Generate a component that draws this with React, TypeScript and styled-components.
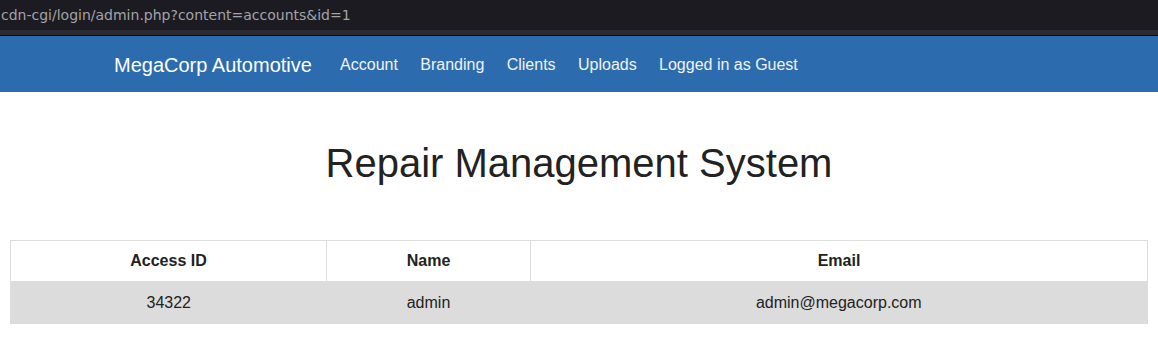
import React from "react";
import styled, { createGlobalStyle } from "styled-components";

const Global = createGlobalStyle`
  html, body { margin: 0; padding: 0; background: #fff; }
  body { font-family: "Liberation Sans", Arial, sans-serif; color: #222; }
`;

const AddressBar = styled.div`
  height: 30px;
  background: #1c1b22;
  display: flex;
  align-items: center;
  overflow: hidden;
`;

const Url = styled.span`
  font-family: "DejaVu Sans", sans-serif;
  font-size: 14px;
  color: #a3a3a8;
  white-space: nowrap;
  padding-left: 1px;
`;

const Strip = styled.div`
  height: 5px;
  background: #2b2a33;
  border-bottom: 1px solid #0c0c0d;
`;

const Navbar = styled.nav`
  height: 56px;
  box-sizing: border-box;
  padding-top: 2px;
  background: #2c6cae;
  display: flex;
  align-items: center;
  padding-left: 114px;
`;

const Brand = styled.a`
  font-size: 20px;
  color: #fff;
  margin-right: 17px;
`;

const NavLink = styled.a`
  font-size: 16px;
  color: #f2f2f2;
  padding: 0 11.2px;
`;

const Title = styled.h1`
  margin: 45px 0 51px;
  text-align: center;
  font-size: 40px;
  font-weight: 400;
  line-height: 52px;
  color: #222;
`;

const Table = styled.table`
  margin: 0 10px;
  width: calc(100% - 20px);
  border-collapse: collapse;
  border: 1px solid #dddddd;
`;

const Th = styled.th`
  height: 40px;
  padding: 0;
  font-size: 16px;
  font-weight: 700;
  text-align: center;
  color: #222;
  border: 1px solid #dddddd;
`;

const Row = styled.tr<{ $shade?: boolean }>`
  background: ${(p) => (p.$shade ? "#dcdcdc" : "#fff")};
`;

const Td = styled.td`
  height: 41px;
  padding: 0;
  font-size: 16px;
  text-align: center;
  color: #222;
`;

export default function App() {
  return (
    <>
      <Global />
      <AddressBar>
        <Url>cdn-cgi/login/admin.php?content=accounts&amp;id=1</Url>
      </AddressBar>
      <Strip />
      <Navbar>
        <Brand>MegaCorp Automotive</Brand>
        <NavLink>Account</NavLink>
        <NavLink>Branding</NavLink>
        <NavLink>Clients</NavLink>
        <NavLink>Uploads</NavLink>
        <NavLink>Logged in as Guest</NavLink>
      </Navbar>
      <Title>Repair Management System</Title>
      <Table>
        <colgroup>
          <col style={{ width: 316 }} />
          <col style={{ width: 204 }} />
          <col />
        </colgroup>
        <thead>
          <tr>
            <Th>Access ID</Th>
            <Th>Name</Th>
            <Th>Email</Th>
          </tr>
        </thead>
        <tbody>
          <Row $shade>
            <Td>34322</Td>
            <Td>admin</Td>
            <Td>admin@megacorp.com</Td>
          </Row>
        </tbody>
      </Table>
    </>
  );
}
